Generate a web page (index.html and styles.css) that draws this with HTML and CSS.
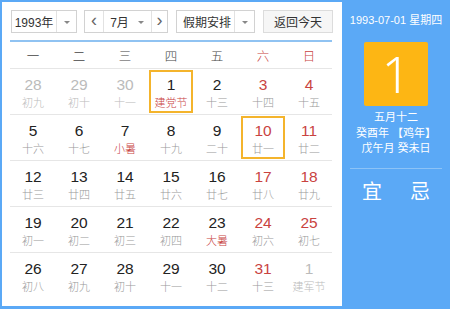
FILE: index.html
```html
<!DOCTYPE html>
<html lang="zh">
<head>
<meta charset="utf-8">
<link rel="stylesheet" href="styles.css">
</head>
<body>
<div class="wrap">
  <div class="main">
    <div class="controls">
      <div class="sel year"><span class="txt">1993年</span><span class="arrow"></span></div>
      <div class="sel month">
        <span class="nav">&lsaquo;</span>
        <span class="mid"><span class="txt">7月</span><span class="tri"></span></span>
        <span class="nav">&rsaquo;</span>
      </div>
      <div class="sel holiday"><span class="txt">假期安排</span><span class="arrow"></span></div>
      <div class="btn">返回今天</div>
    </div>
    <div class="grid">
      <div class="head">
        <span>一</span><span>二</span><span>三</span><span>四</span><span>五</span><span class="we">六</span><span class="we">日</span>
      </div>
      <div class="row">
        <div class="cell other"><b>28</b><i>初九</i></div>
        <div class="cell other"><b>29</b><i>初十</i></div>
        <div class="cell other"><b>30</b><i>十一</i></div>
        <div class="cell sel-day"><b>1</b><i class="fest">建党节</i></div>
        <div class="cell"><b>2</b><i>十三</i></div>
        <div class="cell we"><b>3</b><i>十四</i></div>
        <div class="cell we"><b>4</b><i>十五</i></div>
      </div>
      <div class="row">
        <div class="cell"><b>5</b><i>十六</i></div>
        <div class="cell"><b>6</b><i>十七</i></div>
        <div class="cell"><b>7</b><i class="fest">小暑</i></div>
        <div class="cell"><b>8</b><i>十九</i></div>
        <div class="cell"><b>9</b><i>二十</i></div>
        <div class="cell we sel-day"><b>10</b><i>廿一</i></div>
        <div class="cell we"><b>11</b><i>廿二</i></div>
      </div>
      <div class="row">
        <div class="cell"><b>12</b><i>廿三</i></div>
        <div class="cell"><b>13</b><i>廿四</i></div>
        <div class="cell"><b>14</b><i>廿五</i></div>
        <div class="cell"><b>15</b><i>廿六</i></div>
        <div class="cell"><b>16</b><i>廿七</i></div>
        <div class="cell we"><b>17</b><i>廿八</i></div>
        <div class="cell we"><b>18</b><i>廿九</i></div>
      </div>
      <div class="row">
        <div class="cell"><b>19</b><i>初一</i></div>
        <div class="cell"><b>20</b><i>初二</i></div>
        <div class="cell"><b>21</b><i>初三</i></div>
        <div class="cell"><b>22</b><i>初四</i></div>
        <div class="cell"><b>23</b><i class="fest">大暑</i></div>
        <div class="cell we"><b>24</b><i>初六</i></div>
        <div class="cell we"><b>25</b><i>初七</i></div>
      </div>
      <div class="row last">
        <div class="cell"><b>26</b><i>初八</i></div>
        <div class="cell"><b>27</b><i>初九</i></div>
        <div class="cell"><b>28</b><i>初十</i></div>
        <div class="cell"><b>29</b><i>十一</i></div>
        <div class="cell"><b>30</b><i>十二</i></div>
        <div class="cell we"><b>31</b><i>十三</i></div>
        <div class="cell other"><b>1</b><i>建军节</i></div>
      </div>
    </div>
  </div>
  <div class="side">
    <div class="date">1993-07-01 星期四</div>
    <div class="bigday">1</div>
    <div class="lunar">
      <div>五月十二</div>
      <div>癸酉年 【鸡年】</div>
      <div>戊午月 癸未日</div>
    </div>
    <div class="yiji"><span>宜</span><span>忌</span></div>
  </div>
</div>
</body>
</html>
```
FILE: styles.css
```css
* { box-sizing: border-box; }
html, body { margin: 0; padding: 0; }
body {
  width: 450px;
  height: 309px;
  overflow: hidden;
  font-family: "Liberation Sans", "Noto Sans CJK SC", sans-serif;
  color: #333;
}
.wrap {
  display: flex;
  width: 450px;
  height: 309px;
  background: #5ba9f6;
  padding: 2px 0 3px 2px;
}
.main {
  width: 340px;
  height: 304px;
  background: #fff;
  padding: 8px 8px 0 8px;
}
.controls {
  display: flex;
  height: 23px;
  margin-left: 1px;
}
.sel, .btn {
  display: flex;
  align-items: center;
  border: 1px solid #d2d2d2;
  height: 23px;
  font-size: 12px;
  color: #333;
  background: #fff;
}
.sel .txt { flex: 1; text-align: center; }
.sel .arrow {
  width: 20px;
  height: 100%;
  border-left: 1px solid #e2e2e2;
  position: relative;
}
.sel .arrow::after, .tri::after {
  content: "";
  position: absolute;
  left: 50%;
  top: 50%;
  margin-left: -3px;
  margin-top: -1px;
  border-left: 3px solid transparent;
  border-right: 3px solid transparent;
  border-top: 3px solid #888;
}
.year { width: 66px; }
.month { width: 84px; margin-left: 7px; }
.holiday { width: 79px; margin-left: 8px; }
.holiday .txt { padding-left: 3px; }
.btn {
  width: 70px;
  margin-left: 8px;
  justify-content: center;
  background: #f6f6f6;
  border-color: #dcdcdc;
}
.nav {
  width: 18px;
  height: 100%;
  display: flex;
  align-items: center;
  justify-content: center;
  font-size: 18px;
  color: #666;
  padding-bottom: 2px;
}
.month .nav:last-child { width: 16px; border-left: 1px solid #e2e2e2; }
.mid {
  flex: 1;
  height: 100%;
  display: flex;
  align-items: center;
  border-left: 1px solid #e2e2e2;
}
.mid .txt { flex: 1; text-align: center; padding-left: 4px; }
.tri { width: 20px; height: 100%; position: relative; }
.grid {
  margin-top: 7px;
  width: 322px;
  border-top: 2px solid #90c3f2;
}
.head {
  display: grid;
  grid-template-columns: repeat(7, 46px);
  height: 27px;
  border-bottom: 1px solid #e6e6e6;
  align-items: center;
  font-size: 12.5px;
  color: #444;
  font-family: "Noto Sans CJK SC", sans-serif;
  font-weight: 300;
}
.head span { text-align: center; }
.head .we { color: #c9433f; }
.row {
  display: grid;
  grid-template-columns: repeat(7, 46px);
  height: 46px;
  border-bottom: 1px solid #e6e6e6;
}
.row.last { border-bottom: none; }
.cell {
  display: flex;
  flex-direction: column;
  align-items: center;
  padding-top: 6px;
  height: 45px;
}
.cell b {
  font-weight: normal;
  font-size: 15.5px;
  line-height: 20px;
  color: #222;
}
.cell i {
  font-style: normal;
  font-size: 11px;
  line-height: 14px;
  color: #999;
  font-family: "Noto Sans CJK SC", sans-serif;
  font-weight: 300;
}
.cell.we b { color: #c9433f; }
.cell i.fest { color: #c9433f; }
.cell.other b { color: #bbb; }
.cell.other i { color: #bbb; }
.sel-day {
  outline: 2px solid #f4b42c;
  outline-offset: -3px;
}
.side {
  width: 108px;
  display: flex;
  flex-direction: column;
  align-items: center;
  color: #fff;
}
.date {
  margin-top: 11px;
  font-size: 11px;
  line-height: 14px;
}
.bigday {
  margin-top: 15px;
  width: 64px;
  height: 64px;
  background: #fdb614;
  border-radius: 2px;
  display: flex;
  align-items: center;
  justify-content: center;
  font-size: 50px;
  font-family: "Noto Sans", sans-serif;
  font-weight: 300;
  line-height: 1;
}
.lunar {
  margin-top: 4px;
  font-size: 11px;
  line-height: 15.5px;
  text-align: center;
  width: 92px;
  padding-bottom: 11px;
  border-bottom: 1px solid #8cc3f7;
}
.yiji {
  margin-top: 10px;
  display: flex;
  gap: 28px;
  font-size: 20px;
  line-height: 24px;
  font-family: "Noto Sans CJK SC", sans-serif;
}
```
